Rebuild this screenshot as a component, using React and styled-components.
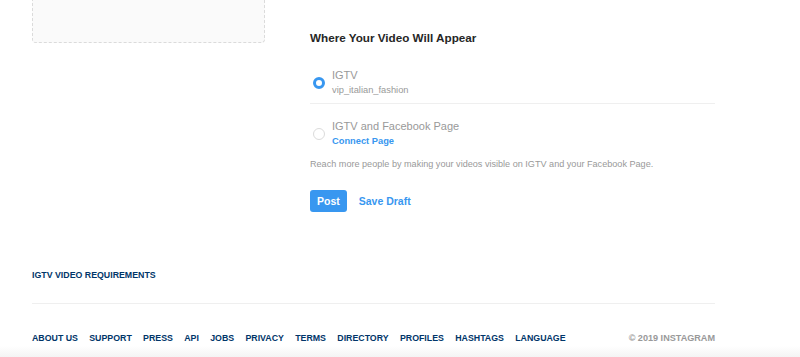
import React from 'react';
import styled, { createGlobalStyle } from 'styled-components';

const GlobalStyle = createGlobalStyle`
  html, body {
    margin: 0;
    padding: 0;
    background: #fff;
    font-family: "Liberation Sans", Arial, sans-serif;
    -webkit-font-smoothing: antialiased;
  }
`

const Page = styled.div`
  width: 800px;
  height: 357px;
  overflow: hidden;
  display: flex;
  flex-direction: column;
  background: linear-gradient(to bottom, #fff 0, #fff 346px, #f4f4f4 357px);
`

const Main = styled.div`
  display: flex;
  gap: 45px;
  padding: 0 85px 0 32px;
`

const UploadBox = styled.div`
  width: 233px;
  height: 150px;
  margin-top: -107px;
  box-sizing: border-box;
  background: #fafafa;
  border: 1px dashed #dbdbdb;
  border-radius: 4px;
  flex-shrink: 0;
`

const Settings = styled.div`
  flex: 1;
  padding-top: 30px;
`

const Title = styled.h2`
  margin: 0 0 22px;
  font-size: 11.7px;
  line-height: 16px;
  font-weight: 700;
  color: #262626;
`

const Option = styled.div`
  display: flex;
  align-items: center;
  gap: 7px;
  padding: ${p => (p.first ? '0 0 6px 3px' : '15px 0 0 3px')};
  border-bottom: ${p => (p.first ? '1px solid #efefef' : 'none')};
`

const Radio = styled.span`
  width: 12px;
  height: 12px;
  border-radius: 50%;
  box-sizing: border-box;
  flex-shrink: 0;
  border: ${p => (p.checked ? '3px solid #3897f0' : '1px solid #dbdbdb')};
  background: #fff;
`

const OptionText = styled.div`
  display: flex;
  flex-direction: column;
  gap: 1px;
`

const OptionLabel = styled.span`
  font-size: 11px;
  line-height: 14px;
  color: #999;
`

const OptionSub = styled.span`
  font-size: 9.3px;
  line-height: 14px;
  color: ${p => (p.link ? '#3897f0' : '#999')};
  font-weight: ${p => (p.link ? 600 : 400)};
`

const Hint = styled.p`
  margin: 9px 0 19px;
  font-size: 9.1px;
  line-height: 14px;
  color: #999;
`

const Actions = styled.div`
  display: flex;
  align-items: center;
  gap: 12px;
`

const PostButton = styled.button`
  height: 22px;
  padding: 0 7px;
  border: none;
  border-radius: 3px;
  background: #3897f0;
  color: #fff;
  font-family: inherit;
  font-size: 10.5px;
  font-weight: 700;
`

const DraftButton = styled.button`
  border: none;
  background: none;
  padding: 0;
  color: #3897f0;
  font-family: inherit;
  font-size: 10.5px;
  font-weight: 700;
`

const Requirements = styled.div`
  margin: 58px 85px 0 32px;
  padding-bottom: 23px;
  border-bottom: 1px solid #efefef;
  font-size: 8.8px;
  line-height: 10px;
  font-weight: 700;
  color: #003569;
  text-transform: uppercase;
`

const Footer = styled.footer`
  display: flex;
  align-items: center;
  justify-content: space-between;
  margin: 29px 85px 0 32px;
`

const FooterLinks = styled.nav`
  display: flex;
  gap: 11.3px;
`

const FooterLink = styled.a`
  font-size: 8.8px;
  line-height: 10px;
  font-weight: 700;
  color: #003569;
  text-transform: uppercase;
  text-decoration: none;
`

const Copyright = styled.span`
  font-size: 9.1px;
  line-height: 10px;
  font-weight: 700;
  color: #999;
  text-transform: uppercase;
`

const links = ['About us', 'Support', 'Press', 'API', 'Jobs', 'Privacy', 'Terms', 'Directory', 'Profiles', 'Hashtags', 'Language']

export default function App() {
  return (
    <Page>
      <GlobalStyle />
      <Main>
        <UploadBox />
        <Settings>
          <Title>Where Your Video Will Appear</Title>
          <Option first>
            <Radio checked />
            <OptionText>
              <OptionLabel>IGTV</OptionLabel>
              <OptionSub>vip_italian_fashion</OptionSub>
            </OptionText>
          </Option>
          <Option>
            <Radio />
            <OptionText>
              <OptionLabel>IGTV and Facebook Page</OptionLabel>
              <OptionSub link>Connect Page</OptionSub>
            </OptionText>
          </Option>
          <Hint>Reach more people by making your videos visible on IGTV and your Facebook Page.</Hint>
          <Actions>
            <PostButton>Post</PostButton>
            <DraftButton>Save Draft</DraftButton>
          </Actions>
        </Settings>
      </Main>
      <Requirements>IGTV Video Requirements</Requirements>
      <Footer>
        <FooterLinks>
          {links.map(l => (
            <FooterLink key={l} href="#">{l}</FooterLink>
          ))}
        </FooterLinks>
        <Copyright>© 2019 Instagram</Copyright>
      </Footer>
    </Page>
  );
}
